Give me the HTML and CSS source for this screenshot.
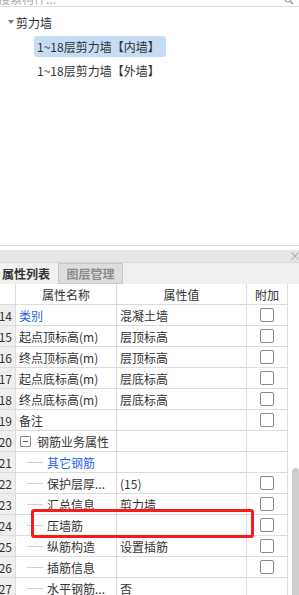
FILE: index.html
```html
<!DOCTYPE html>
<html lang="zh-CN">
  <head>
    <meta charset="UTF-8" />
    <meta name="viewport" content="width=device-width, initial-scale=1.0" />
    <title>构件属性</title>
    <link rel="stylesheet" href="styles.css">
  </head>
  <body>
    <div class="top">
      <div class="search">
        <div class="search-inner">
          <span class="search-text">搜索构件...</span>
          <svg class="search-icon" width="10" height="10" viewBox="0 0 10 10">
            <circle cx="4" cy="4" r="3" fill="none" stroke="#999" stroke-width="1.2" />
            <line x1="6.2" y1="6.2" x2="9" y2="9" stroke="#999" stroke-width="1.4" />
          </svg>
        </div>
      </div>
      <div class="tree">
        <div class="tree-row"><span class="caret"></span>剪力墙</div>
        <div class="tree-row child"><span class="tree-item selected">1~18层剪力墙【内墙】</span></div>
        <div class="tree-row child"><span class="tree-item">1~18层剪力墙【外墙】</span></div>
      </div>
    </div>

    <div class="panel">
      <div class="panel-bar"><span class="close">×</span></div>
      <div class="tabs">
        <div class="tab active">属性列表</div>
        <div class="tab">图层管理</div>
      </div>
      <div class="table-wrap">
        <div class="grid">
          <div class="row head">
            <div class="cell num"></div>
            <div class="cell center">属性名称</div>
            <div class="cell center">属性值</div>
            <div class="cell center">附加</div>
          </div>
          <div class="row">
            <div class="cell num">14</div>
            <div class="cell blue">类别</div>
            <div class="cell">混凝土墙</div>
            <div class="cell center"><span class="check"></span></div>
          </div>
          <div class="row">
            <div class="cell num">15</div>
            <div class="cell">起点顶标高(m)</div>
            <div class="cell">层顶标高</div>
            <div class="cell center"><span class="check"></span></div>
          </div>
          <div class="row">
            <div class="cell num">16</div>
            <div class="cell">终点顶标高(m)</div>
            <div class="cell">层顶标高</div>
            <div class="cell center"><span class="check"></span></div>
          </div>
          <div class="row">
            <div class="cell num">17</div>
            <div class="cell">起点底标高(m)</div>
            <div class="cell">层底标高</div>
            <div class="cell center"><span class="check"></span></div>
          </div>
          <div class="row">
            <div class="cell num">18</div>
            <div class="cell">终点底标高(m)</div>
            <div class="cell">层底标高</div>
            <div class="cell center"><span class="check"></span></div>
          </div>
          <div class="row">
            <div class="cell num">19</div>
            <div class="cell">备注</div>
            <div class="cell"></div>
            <div class="cell center"><span class="check"></span></div>
          </div>
          <div class="row">
            <div class="cell num">20</div>
            <div class="cell group"><span class="toggle"></span>钢筋业务属性</div>
            <div class="cell"></div>
            <div class="cell"></div>
          </div>
          <div class="row">
            <div class="cell num">21</div>
            <div class="cell sub blue"><span class="branch"></span>其它钢筋</div>
            <div class="cell"></div>
            <div class="cell"></div>
          </div>
          <div class="row">
            <div class="cell num">22</div>
            <div class="cell sub"><span class="branch"></span>保护层厚...</div>
            <div class="cell">(15)</div>
            <div class="cell center"><span class="check"></span></div>
          </div>
          <div class="row">
            <div class="cell num">23</div>
            <div class="cell sub"><span class="branch"></span>汇总信息</div>
            <div class="cell">剪力墙</div>
            <div class="cell center"><span class="check"></span></div>
          </div>
          <div class="row">
            <div class="cell num">24</div>
            <div class="cell sub"><span class="branch"></span>压墙筋</div>
            <div class="cell"></div>
            <div class="cell center"><span class="check"></span></div>
          </div>
          <div class="row">
            <div class="cell num">25</div>
            <div class="cell sub"><span class="branch"></span>纵筋构造</div>
            <div class="cell">设置插筋</div>
            <div class="cell center"><span class="check"></span></div>
          </div>
          <div class="row">
            <div class="cell num">26</div>
            <div class="cell sub"><span class="branch"></span>插筋信息</div>
            <div class="cell"></div>
            <div class="cell center"><span class="check"></span></div>
          </div>
          <div class="row">
            <div class="cell num">27</div>
            <div class="cell sub"><span class="branch"></span>水平钢筋...</div>
            <div class="cell">否</div>
            <div class="cell"></div>
          </div>
        </div>
        <div class="scroll"><div class="thumb"></div></div>
        <div class="mark"></div>
      </div>
    </div>
  </body>
</html>
```

FILE: styles.css
```css
body {
  margin: 0;
  width: 299px;
  height: 595px;
  overflow: hidden;
  font-family: "Noto Sans CJK SC", "Microsoft YaHei", sans-serif;
  font-size: 12px;
  color: #333;
  background: #fff;
}

.top {
  height: 245px;
  border-bottom: 1px solid #dcdcdc;
}

.search {
  height: 6px;
  overflow: hidden;
  border-bottom: 1px solid #dedede;
}

.search-inner {
  display: flex;
  align-items: center;
  justify-content: space-between;
  height: 18px;
  margin-top: -11px;
  padding-right: 5px;
  color: #aaa;
}

.search-text {
  margin-left: -2px;
}

.search-icon {
  margin-top: 4px;
}

.tree {
  padding-top: 3px;
}

.tree-row {
  display: flex;
  align-items: center;
  height: 24px;
  padding-left: 8px;
}

.tree-row.child {
  padding-left: 34px;
}

.caret {
  width: 0;
  height: 0;
  border-left: 3.5px solid transparent;
  border-right: 3.5px solid transparent;
  border-top: 4px solid #777;
  margin-right: 2px;
}

.tree-item {
  display: flex;
  align-items: center;
  height: 21px;
  padding: 0 6px 0 3px;
  border-radius: 3px;
}

.tree-item.selected {
  background: #c6dcf4;
}

.panel {
  padding-top: 4px;
}

.panel-bar {
  display: flex;
  justify-content: flex-end;
  align-items: center;
  height: 12px;
  background: #e6e6e6;
  border-bottom: 1px solid #d8d8d8;
  line-height: 12px;
}

.close {
  color: #aaa;
  font-size: 12px;
  margin-right: -2px;
}

.tabs {
  display: flex;
  height: 21px;
  background: #f0f0f0;
}

.tab {
  display: flex;
  align-items: center;
  justify-content: center;
  width: 65px;
  box-sizing: border-box;
  font-weight: bold;
  color: #8c8c8c;
  background: #dddddd;
  border: 1px solid #c9c9c9;
}

.tab.active {
  width: 58px;
  justify-content: flex-start;
  padding-left: 2px;
  color: #333;
  background: #f0f0f0;
  border: none;
}

.table-wrap {
  position: relative;
  display: flex;
}

.grid {
  width: 288px;
}

.row {
  display: grid;
  grid-template-columns: 16px 101px 130px 41px;
  height: 21px;
  box-sizing: border-box;
  border-bottom: 1px solid #dcdcdc;
}

.cell {
  display: flex;
  align-items: center;
  padding-left: 3px;
  border-right: 1px solid #dcdcdc;
  white-space: nowrap;
  overflow: hidden;
}

.cell.num {
  justify-content: flex-end;
  padding: 0 3px 0 0;
  background: #efefef;
  font-size: 12px;
}

.head .cell.num {
  background: #fff;
}

.cell.center {
  justify-content: center;
  padding-left: 0;
}

.blue {
  color: #2464e0;
}

.cell.group {
  padding-left: 4px;
}

.toggle {
  position: relative;
  width: 11px;
  height: 11px;
  box-sizing: border-box;
  border: 1px solid #888;
  border-radius: 1px;
  margin-right: 6px;
}

.toggle::after {
  content: "";
  position: absolute;
  left: 2px;
  top: 4px;
  width: 5px;
  height: 1px;
  background: #555;
}

.cell.sub {
  padding-left: 11px;
}

.branch {
  width: 16px;
  height: 1px;
  background: #cfcfcf;
  margin-right: 4px;
}

.check {
  width: 14px;
  height: 14px;
  box-sizing: border-box;
  border: 1px solid #8a8a8a;
  border-radius: 2px;
}

.scroll {
  flex: 1;
  padding-top: 184px;
}

.thumb {
  height: 200px;
  margin-left: 4px;
  background: #cdcdcd;
  border-radius: 4px;
}

.mark {
  position: absolute;
  left: 31px;
  top: 225px;
  width: 223px;
  height: 29px;
  box-sizing: border-box;
  border: 3px solid #fb1a1a;
  border-radius: 3px;
}
```
